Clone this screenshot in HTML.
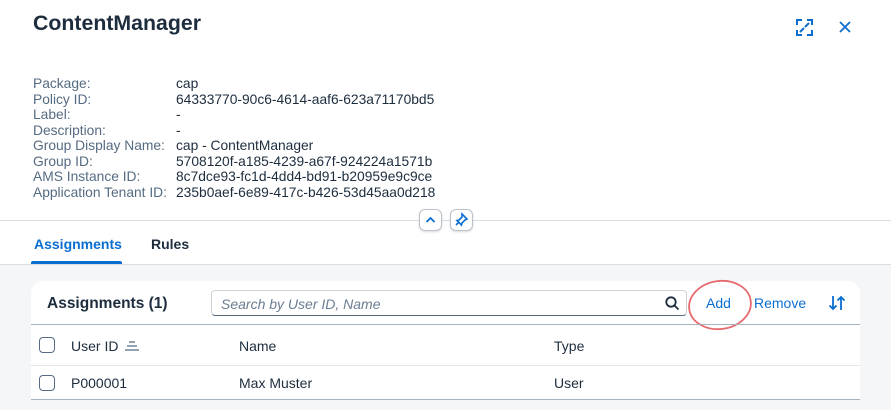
<!DOCTYPE html>
<html><head><meta charset="utf-8"><style>
*{margin:0;padding:0;box-sizing:border-box}
body{width:891px;height:410px;overflow:hidden;background:#f5f6f7;font-family:"Liberation Sans",sans-serif;position:relative;color:#1d2d3e}
.top{position:absolute;left:0;top:0;width:891px;height:264px;background:#fff}
.title{position:absolute;left:33px;top:11px;font-size:21.3px;font-weight:bold;color:#1d2d3e}
.det{position:absolute;left:33px;top:76px;font-size:13.8px;line-height:15.5px;color:#556b82}
.det div{white-space:nowrap}
.det span{display:inline-block;width:143px}
.det b{font-weight:normal;color:#1d2d3e}
.hl{position:absolute;left:0;top:220px;width:891px;height:1px;background:#d9dde1}
.hl2{position:absolute;left:0;top:264px;width:891px;height:1px;background:#d9dde1}
.btn{position:absolute;top:209px;width:23px;height:22px;background:#fff;border:1px solid #bcc3ca;border-radius:6px;box-shadow:0 1px 2px rgba(0,0,0,.15)}
.tab{position:absolute;top:236px;font-size:14px;font-weight:bold}
.ul{position:absolute;left:31px;top:261px;width:91px;height:3px;background:#0a6ed1;border-radius:2px 2px 0 0}
.card{position:absolute;left:31px;top:281px;width:829px;height:119px;background:#fff;border-radius:12px 12px 0 0;border-bottom:1px solid #a8b2bd}
.ch{position:absolute;left:16px;top:14px;font-size:15.5px;font-weight:bold}
.search{position:absolute;left:180px;top:9px;width:476px;height:26px;border:1px solid #cdd3d8;border-bottom:1px solid #556b82;border-radius:4px;font-style:italic;font-size:14px;color:#6a7d90;padding:5px 9px}
.lk{position:absolute;top:14px;font-size:14px;color:#0a6ed1}
.line{position:absolute;left:0;width:829px;height:1px}
.cb{position:absolute;left:8px;width:16px;height:16px;border:1px solid #556b82;border-radius:4px}
.t{position:absolute;font-size:14px}
</style></head><body>
<div class="top"></div>
<div class="title">ContentManager</div>
<svg style="position:absolute;left:796px;top:19px" width="17" height="17" viewBox="0 0 17 17" fill="none" stroke="#0a6ed1" stroke-width="2"><path d="M1 6V1h5M11 1h5v5M16 11v5h-5M6 16H1v-5M4 13l4-4M13 4l-4 4"/></svg>
<svg style="position:absolute;left:839px;top:21px" width="12" height="12" viewBox="0 0 12 12" stroke="#0a6ed1" stroke-width="1.8"><path d="M1 1l10 10M11 1L1 11"/></svg>
<div class="det">
<div><span>Package:</span><b>cap</b></div>
<div><span>Policy ID:</span><b>64333770-90c6-4614-aaf6-623a71170bd5</b></div>
<div><span>Label:</span><b>-</b></div>
<div><span>Description:</span><b>-</b></div>
<div><span>Group Display Name:</span><b>cap - ContentManager</b></div>
<div><span>Group ID:</span><b>5708120f-a185-4239-a67f-924224a1571b</b></div>
<div><span>AMS Instance ID:</span><b>8c7dce93-fc1d-4dd4-bd91-b20959e9c9ce</b></div>
<div><span>Application Tenant ID:</span><b>235b0aef-6e89-417c-b426-53d45aa0d218</b></div>
</div>
<div class="hl"></div>
<div class="btn" style="left:419px"><svg width="21" height="20" viewBox="0 0 21 20" fill="none" stroke="#0a6ed1" stroke-width="1.8"><path d="M6.5 12l4-4 4 4"/></svg></div>
<div class="btn" style="left:450px"><svg width="21" height="20" viewBox="0 0 21 20" fill="none" stroke="#0a6ed1" stroke-width="1.6"><path d="M11 4l5 5-2 1-3 3-.5 2L6 10.5l2-.5 3-3zM8 12l-3 3"/></svg></div>
<div class="tab" style="left:34px;color:#0a6ed1">Assignments</div>
<div class="tab" style="left:151px">Rules</div>
<div class="ul"></div>
<div class="hl2"></div>
<div class="card">
<div class="ch">Assignments (1)</div>
<div class="search">Search by User ID, Name</div>
<svg style="position:absolute;left:634px;top:15px" width="15" height="15" viewBox="0 0 15 15" fill="none" stroke="#1d2d3e" stroke-width="1.8"><circle cx="6" cy="6" r="4.7"/><path d="M9.5 9.5l4 4"/></svg>
<div class="lk" style="left:675px">Add</div>
<div class="lk" style="left:723px">Remove</div>
<svg style="position:absolute;left:797px;top:13px" width="18" height="18" viewBox="0 0 18 18" fill="none" stroke="#0a6ed1" stroke-width="1.8"><path d="M5 2v13M1.5 11.5L5 15l3.5-3.5M13 16V3M9.5 6.5L13 3l3.5 3.5"/></svg>
<svg style="position:absolute;left:654px;top:-4px" width="70" height="56" viewBox="0 0 70 56" fill="none" stroke="#e0454a" stroke-width="1.8" opacity=".8"><ellipse cx="35" cy="28" rx="31" ry="24" transform="rotate(-8 35 28)"/></svg>
<div class="line" style="top:43px;background:#a8b2bd"></div>
<div class="cb" style="top:56px"></div>
<div class="t" style="left:40px;top:57px">User ID</div>
<svg style="position:absolute;left:94px;top:60px" width="14" height="10" stroke="#556b82" stroke-width="1.2"><path d="M4 1h6M2 5h10M0 9h14"/></svg>
<div class="t" style="left:208px;top:57px">Name</div>
<div class="t" style="left:523px;top:57px">Type</div>
<div class="line" style="top:84px;background:#e5e5e5"></div>
<div class="cb" style="top:94px"></div>
<div class="t" style="left:40px;top:94px">P000001</div>
<div class="t" style="left:208px;top:94px">Max Muster</div>
<div class="t" style="left:523px;top:94px">User</div>
</div>
</body></html>
